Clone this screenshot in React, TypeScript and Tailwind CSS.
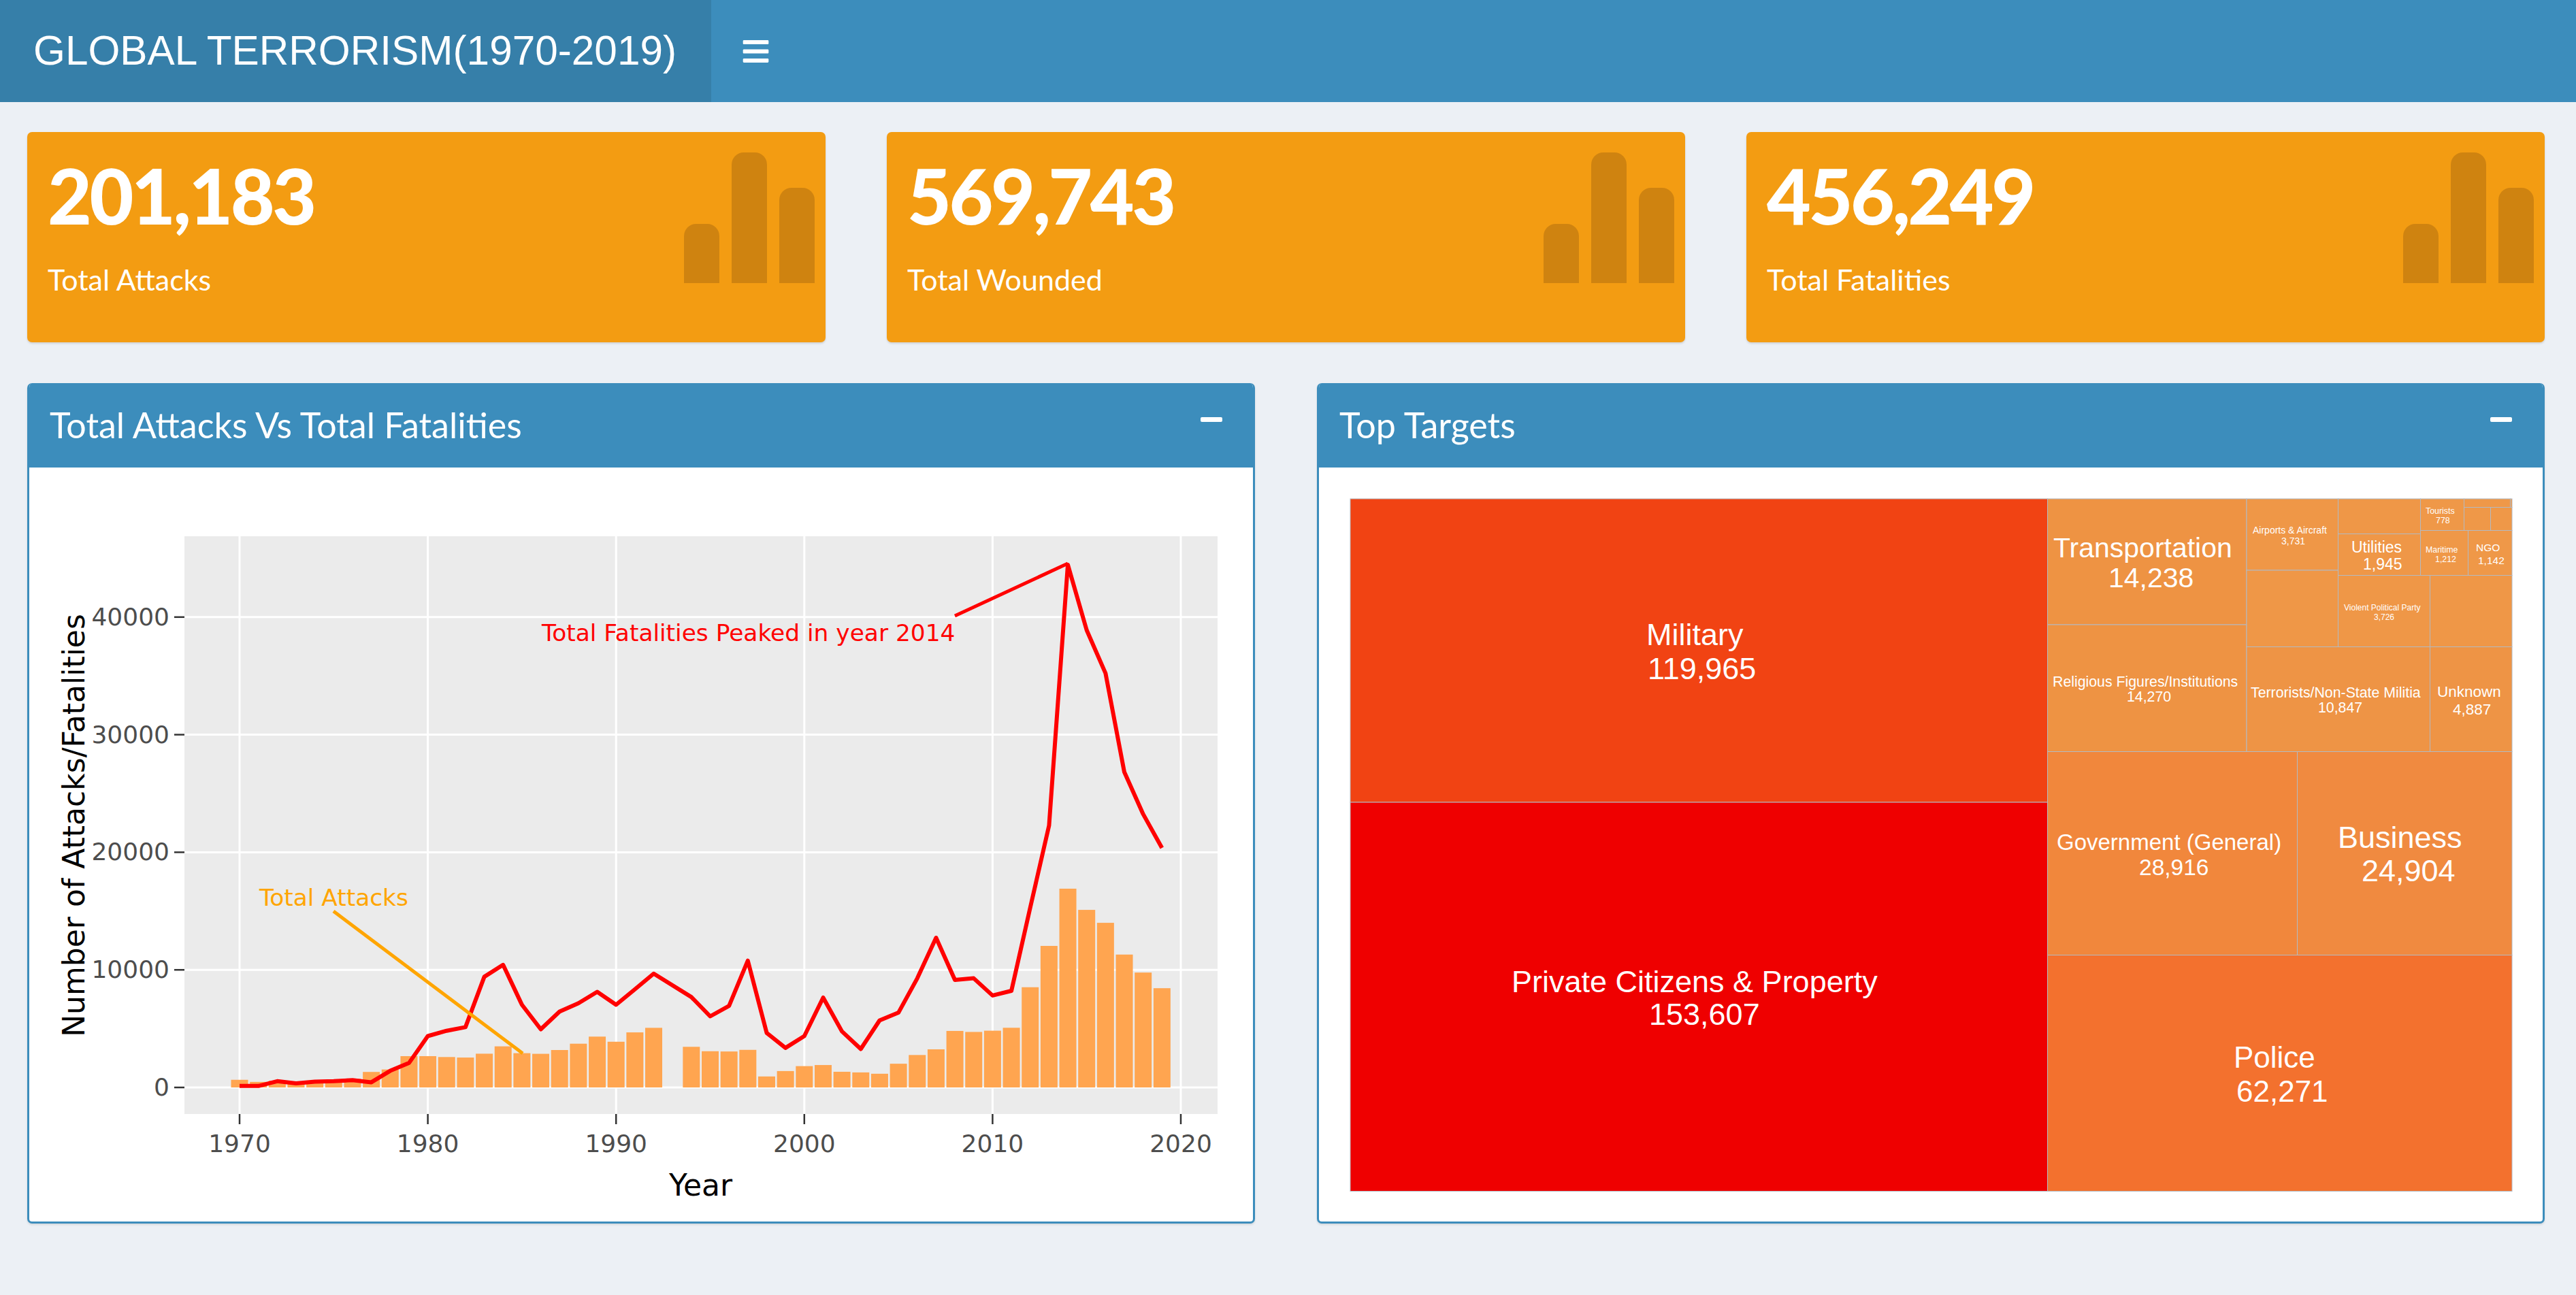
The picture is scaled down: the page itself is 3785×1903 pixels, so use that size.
import { FaBars } from 'react-icons/fa';

const attacks = [651, 471, 568, 473, 581, 600, 740, 1319, 1526, 2662, 2662, 2586, 2544, 2870, 3495, 2915, 2860, 3183, 3721, 4324, 3887, 4683, 5071, 0, 3456, 3081, 3058, 3197, 934, 1395, 1814, 1906, 1333, 1278, 1166, 2017, 2758, 3242, 4805, 4721, 4826, 5076, 8522, 12036, 16903, 15100, 14000, 11300, 9770, 8440];
const fatalities = [130, 130, 530, 350, 490, 530, 620, 440, 1410, 2080, 4370, 4820, 5130, 9410, 10430, 7030, 4950, 6450, 7160, 8130, 7030, 8350, 9680, null, 7690, 6050, 6940, 10780, 4640, 3360, 4370, 7640, 4770, 3270, 5700, 6360, 9280, 12730, 9150, 9280, 7820, 8220, 15290, 22270, 44450, 38890, 35220, 26820, 23240, 20370];

const xOf = (year: number) => 352 + (year - 1970) * 27.66;
const yOf = (v: number) => 1598 - v * 0.01728;

const linePoints = fatalities
    .map((v, i) => (v === null ? null : `${xOf(1970 + i).toFixed(1)},${yOf(v).toFixed(1)}`))
    .filter(Boolean)
    .join(' ');

const StatBox = ({ value, label }: { value: string; label: string }) => (
    <div className="relative h-[309px] rounded-[7px] bg-[#f39c12] pl-[30px] pt-[29px] text-white shadow-[0_2px_3px_rgba(0,0,0,0.12)]">
        <div className="text-[112px] font-black leading-[1.15] tracking-[-3.5px]">{value}</div>
        <div className="mt-[33px] text-[43px] leading-[1.2]">{label}</div>
        <svg className="absolute left-[calc(100%-208px)] top-[30px]" width="192" height="192" viewBox="0 0 192 192" fill="#cf8310">
            <path d="M0 192V123a18 18 0 0 1 18-18h16a18 18 0 0 1 18 18v69z" />
            <path d="M70 192V18a18 18 0 0 1 18-18h16a18 18 0 0 1 18 18v174z" />
            <path d="M140 192V70a18 18 0 0 1 18-18h16a18 18 0 0 1 18 18v122z" />
        </svg>
    </div>
);

const Panel = ({ title, children }: { title: string; children: React.ReactNode }) => (
    <div className="h-[1235px] overflow-hidden rounded-[7px] border-x-[3px] border-b-[3px] border-[#3c8dbc] bg-white shadow-[0_2px_3px_rgba(0,0,0,0.1)]">
        <div className="flex h-[124px] items-center justify-between bg-[#3c8dbc] pb-[3px] pl-[30px] pr-[45px] text-white">
            <h3 className="text-[52px] leading-none">{title}</h3>
            <div className="mb-[14px] h-[7px] w-8 rounded-[2px] bg-white" />
        </div>
        {children}
    </div>
);

const AttacksChart = () => (
    <svg width="1798" height="1108" viewBox="43 687 1798 1108" className="block font-['DejaVu_Sans',sans-serif]">
        <rect x="271" y="788" width="1518" height="849" fill="#ebebeb" />
        {[0, 10000, 20000, 30000, 40000].map((v) => (
            <g key={v}>
                <line x1="271" x2="1789" y1={yOf(v)} y2={yOf(v)} stroke="#fff" strokeWidth="3" />
                <line x1="256" x2="271" y1={yOf(v)} y2={yOf(v)} stroke="#333" strokeWidth="2.5" />
                <text x="249" y={yOf(v) + 12} textAnchor="end" fontSize="36" fill="#4d4d4d">{v}</text>
            </g>
        ))}
        {[1970, 1980, 1990, 2000, 2010, 2020].map((year) => (
            <g key={year}>
                <line x1={xOf(year)} x2={xOf(year)} y1="788" y2="1637" stroke="#fff" strokeWidth="3" />
                <line x1={xOf(year)} x2={xOf(year)} y1="1637" y2="1652" stroke="#333" strokeWidth="2.5" />
                <text x={xOf(year)} y="1693" textAnchor="middle" fontSize="36" fill="#4d4d4d">{year}</text>
            </g>
        ))}
        {attacks.map((v, i) => (
            <rect key={i} x={xOf(1970 + i) - 12.5} y={yOf(v)} width="25" height={v * 0.01728} fill="#ffa550" />
        ))}
        <polyline points={linePoints} fill="none" stroke="#ff0000" strokeWidth="6" strokeLinejoin="round" />
        <line x1="1403" y1="905" x2="1569" y2="828" stroke="#ff0000" strokeWidth="5" />
        <text x="796" y="942" fontSize="34.4" fill="#ff0000">Total Fatalities Peaked in year 2014</text>
        <line x1="490" y1="1339" x2="768" y2="1548" stroke="#ffa500" strokeWidth="5" />
        <text x="381" y="1331" fontSize="34.4" fill="#ffa500">Total Attacks</text>
        <text x="983" y="1757" fontSize="44" fill="#000">Year</text>
        <text transform="translate(124 1213) rotate(-90)" textAnchor="middle" fontSize="44" fill="#000">Number of Attacks/Fatalities</text>
    </svg>
);

type Cell = { x: number; y: number; x2: number; y2: number; fill: string };
type Label = { text: string; x: number; y: number; size: number };

const cells: Cell[] = [
    { x: 1984, y: 733, x2: 3008.5, y2: 1179, fill: '#f14313' },
    { x: 1984, y: 1179, x2: 3008.5, y2: 1750.5, fill: '#ef0000' },
    { x: 3008.5, y: 1403.5, x2: 3691, y2: 1750.5, fill: '#f3712e' },
    { x: 3008.5, y: 1104.5, x2: 3375.5, y2: 1403.5, fill: '#f1873c' },
    { x: 3375.5, y: 1104.5, x2: 3691, y2: 1403.5, fill: '#f08a40' },
    { x: 3008.5, y: 733, x2: 3301, y2: 918, fill: '#ee9343' },
    { x: 3008.5, y: 918, x2: 3301, y2: 1104.5, fill: '#ee9343' },
    { x: 3301, y: 950.5, x2: 3570.5, y2: 1104.5, fill: '#ee9445' },
    { x: 3570.5, y: 950.5, x2: 3691, y2: 1104.5, fill: '#ee9445' },
    { x: 3301, y: 733, x2: 3435.5, y2: 838, fill: '#ef9747' },
    { x: 3301, y: 838, x2: 3435.5, y2: 950.5, fill: '#ef9747' },
    { x: 3435.5, y: 845.5, x2: 3570.5, y2: 950.5, fill: '#ef9747' },
    { x: 3570.5, y: 845.5, x2: 3691, y2: 950.5, fill: '#ef9747' },
    { x: 3435.5, y: 733, x2: 3556.5, y2: 784.5, fill: '#ef9747' },
    { x: 3435.5, y: 784.5, x2: 3556.5, y2: 845.5, fill: '#ef9747' },
    { x: 3556.5, y: 733, x2: 3620.5, y2: 779.5, fill: '#ef9848' },
    { x: 3556.5, y: 779.5, x2: 3626.5, y2: 845.5, fill: '#ef9848' },
    { x: 3626.5, y: 779.5, x2: 3691, y2: 845.5, fill: '#ef9848' },
    { x: 3620.5, y: 733, x2: 3688.5, y2: 745.5, fill: '#ef9848' },
    { x: 3688.5, y: 733, x2: 3691, y2: 745.5, fill: '#ef9848' },
    { x: 3620.5, y: 745.5, x2: 3659.5, y2: 779.5, fill: '#ef9848' },
    { x: 3659.5, y: 745.5, x2: 3691, y2: 779.5, fill: '#ef9848' },
];

const labels: Label[] = [
    { text: 'Military', x: 2419, y: 948, size: 45 },
    { text: '119,965', x: 2421, y: 998, size: 45 },
    { text: 'Private Citizens & Property', x: 2221, y: 1458, size: 45 },
    { text: '153,607', x: 2423, y: 1506, size: 45 },
    { text: 'Police', x: 3282, y: 1569, size: 44 },
    { text: '62,271', x: 3286, y: 1619, size: 44 },
    { text: 'Business', x: 3435, y: 1246, size: 45 },
    { text: '24,904', x: 3470, y: 1295, size: 45 },
    { text: 'Government (General)', x: 3022, y: 1249, size: 33 },
    { text: '28,916', x: 3143, y: 1286, size: 33.5 },
    { text: 'Transportation', x: 3017, y: 819, size: 41 },
    { text: '14,238', x: 3098, y: 863, size: 41 },
    { text: 'Religious Figures/Institutions', x: 3016, y: 1009, size: 21.3 },
    { text: '14,270', x: 3125, y: 1031, size: 21.3 },
    { text: 'Terrorists/Non-State Militia', x: 3307, y: 1025, size: 21.3 },
    { text: '10,847', x: 3406, y: 1047, size: 21.3 },
    { text: 'Unknown', x: 3581, y: 1024, size: 22.5 },
    { text: '4,887', x: 3604, y: 1050, size: 22.5 },
    { text: 'Airports & Aircraft', x: 3310, y: 784, size: 14 },
    { text: '3,731', x: 3352, y: 800, size: 14 },
    { text: 'Utilities', x: 3455, y: 812, size: 23 },
    { text: '1,945', x: 3472, y: 837, size: 23 },
    { text: 'Tourists', x: 3564, y: 755, size: 12.4 },
    { text: '778', x: 3579, y: 769, size: 12.4 },
    { text: 'Maritime', x: 3564, y: 812, size: 12.4 },
    { text: '1,212', x: 3578, y: 826, size: 12.4 },
    { text: 'NGO', x: 3638, y: 810, size: 15.5 },
    { text: '1,142', x: 3641, y: 829, size: 15.5 },
    { text: 'Violent Political Party', x: 3444, y: 897, size: 12 },
    { text: '3,726', x: 3488, y: 911, size: 12 },
];

const TargetsTreemap = () => (
    <svg width="1798" height="1108" viewBox="1938 687 1798 1108" className="block font-['Liberation_Sans',sans-serif]">
        {cells.map((c, i) => (
            <rect key={i} x={c.x} y={c.y} width={c.x2 - c.x} height={c.y2 - c.y} fill={c.fill} stroke="#b3bac2" strokeWidth="1" />
        ))}
        {labels.map((l) => (
            <text key={l.text} x={l.x} y={l.y} fontSize={l.size} fill="#fff">{l.text}</text>
        ))}
    </svg>
);

export default function App() {
    return (
        <div className="h-[1903px] bg-[#ecf0f5] font-['Lato',sans-serif]">
            <header className="flex h-[150px] bg-[#3c8dbc] text-white">
                <div className="flex w-[1045px] items-center bg-[#367fa9] pb-[2px] pl-[49px] font-['Liberation_Sans',sans-serif] text-[60.3px] leading-none">
                    GLOBAL TERRORISM(1970-2019)
                </div>
                <div className="flex items-center pl-[44px]">
                    <FaBars size={43} />
                </div>
            </header>
            <main className="pl-10 pr-[46px] pt-[44px]">
                <div className="grid grid-cols-3 gap-[90px]">
                    <StatBox value="201,183" label="Total Attacks" />
                    <StatBox value="569,743" label="Total Wounded" />
                    <StatBox value="456,249" label="Total Fatalities" />
                </div>
                <div className="mt-[60px] grid grid-cols-2 gap-[91px]">
                    <Panel title="Total Attacks Vs Total Fatalities">
                        <AttacksChart />
                    </Panel>
                    <Panel title="Top Targets">
                        <TargetsTreemap />
                    </Panel>
                </div>
            </main>
        </div>
    );
}
